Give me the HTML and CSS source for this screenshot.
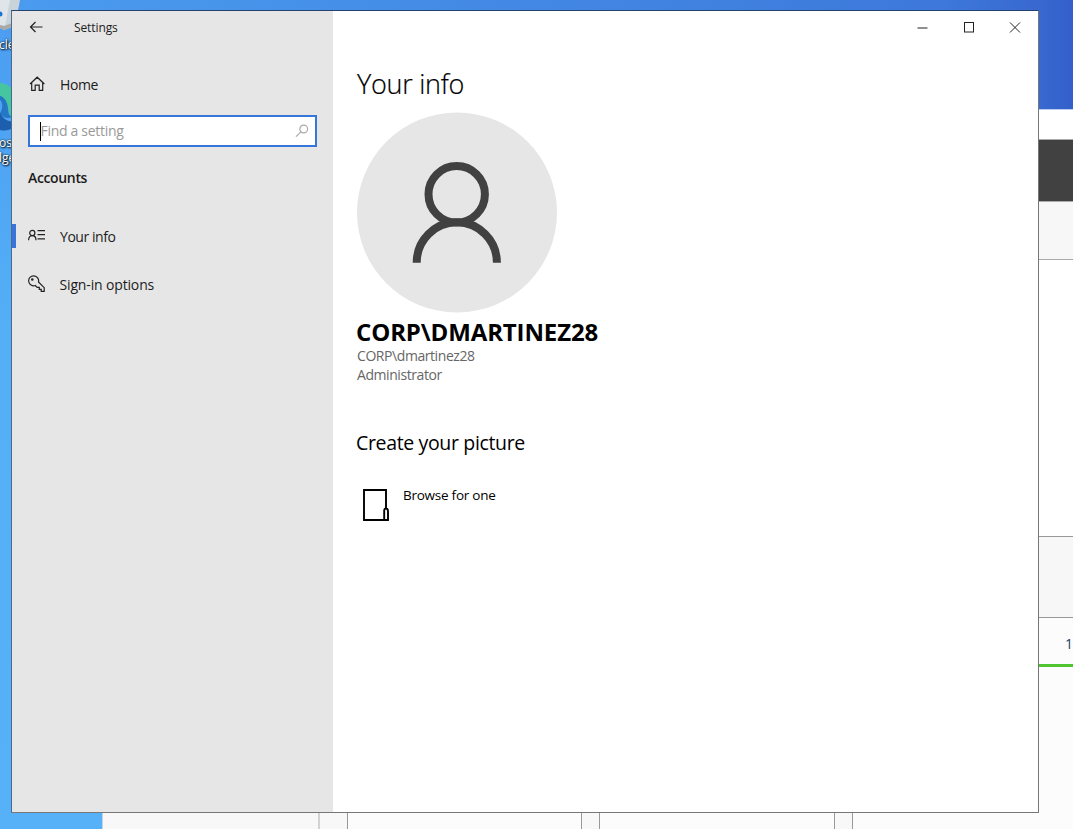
FILE: index.html
```html
<!DOCTYPE html>
<html lang="en">
<head>
<meta charset="utf-8">
<title>Settings</title>
<link rel="stylesheet" href="styles.css">
</head>
<body>
<div class="desktop">
  <div class="shortcut bin">
    <svg width="24" height="34" viewBox="0 0 24 34"><path d="M0 0H20L15 26 4 30 0 28Z" fill="#c9d3da"/><path d="M0 0H10L5 26 0 25Z" fill="#dfe5e9"/><path d="M4 26L15 22V26L4 30 0 28V25Z" fill="#aaa9a7"/><circle cx="0" cy="14" r="2.5" fill="#1876d2"/></svg>
    <span class="label">cle</span>
  </div>
  <div class="shortcut edge">
    <svg width="24" height="50" viewBox="0 0 24 50"><path d="M0 0C8 0 16 6 16 20V34H10C9 24 6 17 0 15Z" fill="#45c5a0"/><path d="M0 29C3 36 8 40 16 38V43C10 48 4 48 0 47Z" fill="#1c5fae"/><path d="M0 13C5 14 8 20 8 27 8 31 10 33 12 34 8 36 3 35 0 30 3 26 3 19 0 17Z" fill="#2477c4"/></svg>
    <span class="label">os</span><span class="label">lge</span>
  </div>

  <div class="backwin">
    <div class="b-title"></div>
    <div class="b-dark"></div>
    <div class="b-tools"></div>
    <div class="b-body"></div>
    <div class="b-panel"></div>
    <div class="b-tab">1</div>
    <div class="b-cols">
      <div class="gutter first"></div>
      <div class="gutter second"></div>
      <div class="cell c1"></div>
      <div class="gutter g2"></div>
      <div class="cell c2"></div>
      <div class="gutter g3"></div>
      <div class="cell rest"></div>
    </div>
  </div>

  <div class="window">
    <aside class="sidebar">
      <header class="titlebar">
        <svg width="14" height="12" viewBox="0 0 14 12" class="line"><path d="M13.500 6H1.500M6.500 1L1.500 6l5 5"/></svg>
        <span class="apptitle">Settings</span>
      </header>
      <div class="item home">
        <svg width="18" height="18" viewBox="0 0 18 18" class="line"><path d="M2 9L9.200 2.200 16.400 9M3.700 7.600V15.300H7.200V10.200H11.200V15.300H14.700V7.600"/></svg>
        <span class="t-home">Home</span>
      </div>
      <div class="search">
        <span class="caret"></span><span class="hint">Find a setting</span>
        <svg width="14" height="14" viewBox="0 0 14 14"><circle cx="8.7" cy="5" r="3.9"/><path d="M5.9 7.8L1 12.7"/></svg>
      </div>
      <div class="section">Accounts</div>
      <div class="item active">
        <svg width="18" height="14" viewBox="0 0 18 14" class="line"><circle cx="4.3" cy="4" r="2.6"/><path d="M.6 11.200C.6 8.500 2 6.700 4.300 6.700S8 8.500 8 11.200M9.500 1.700H17M9.500 5.700H17M9.500 9.900H17"/></svg>
        <span class="t-info">Your info</span>
      </div>
      <div class="item signin">
        <svg width="18" height="18" viewBox="0 0 18 18" class="line"><path d="M7.300 10.500A5 5 0 1 1 10.500 7L16.200 12.700V16.300H13.200V14.300H11.300V12.400H9.200Z"/><circle cx="4.300" cy="4.500" r=".7"/></svg>
        <span class="t-sign">Sign-in options</span>
      </div>
    </aside>
    <main class="content">
      <div class="controls">
        <svg width="46" height="32" viewBox="0 0 46 32"><path d="M17.500 17H27.500"/></svg>
        <svg width="46" height="32" viewBox="0 0 46 32"><rect x="18.5" y="11.5" width="9" height="9.500"/></svg>
        <svg width="46" height="32" viewBox="0 0 46 32"><path d="M18 11.500L28 21.500M28 11.500L18 21.500"/></svg>
      </div>
      <h1>Your info</h1>
      <svg class="avatar" width="200" height="201" viewBox="0 0 200 201"><circle cx="100" cy="100.500" r="100" fill="#e6e6e6"/><g fill="none" stroke="#414141" stroke-width="8"><circle cx="99.7" cy="82.300" r="28.2"/><path d="M59.700 150.700A40 40.300 0 0 1 139.900 150.700"/></g></svg>
      <div class="name">CORP\DMARTINEZ28</div>
      <div class="meta">CORP\dmartinez28</div>
      <div class="meta">Administrator</div>
      <h2>Create your picture</h2>
      <div class="browse">
        <svg width="28" height="34" viewBox="0 0 28 34"><path d="M24 20.500V2H2V32H26V23.500Q26 20.500 24 20.500T22.200 23.500V32" fill="none" stroke="#000" stroke-width="1.900"/></svg>
        <span>Browse for one</span>
      </div>
    </main>
  </div>
</div>
</body>
</html>
```
FILE: styles.css
```css
* { box-sizing: border-box; }
body { margin: 0; font-family: "Open Sans", "Noto Sans", sans-serif; font-size: 14px; color: #1c1c1c; }
svg { display: block; flex: none; }
span { white-space: nowrap; }
.desktop { position: relative; width: 1073px; height: 829px; overflow: hidden;
  background: linear-gradient(15deg, rgba(61,116,218,0) 0%, #3d78da 85%, #355fcb 100%) top / 100% 109px no-repeat, linear-gradient(#4a9cf0, #54aff7 40%, #56b1f8); }
.shortcut { position: absolute; left: 0; display: flex; flex-direction: column; }
.bin { top: 0; }
.edge { top: 83px; }
.label { color: #fff; font-size: 12px; line-height: 15px; text-shadow: 1px 1px 2px #000, 0 0 2px #000; }
.bin .label { margin-top: 3px; margin-left: -1px; }
.edge .label { margin-left: -1px; position: relative; top: 2px; }
.desktop { background: linear-gradient(to right, rgba(61,120,218,0) 0%, #3d78da 88%, #3868d0 97%, #345fcb 100%) top / 100% 109px no-repeat, linear-gradient(#4a9cf0, #54aff7 40%, #56b1f8); }

.backwin { position: absolute; left: 102px; top: 109px; width: 971px; height: 720px; display: flex; flex-direction: column; background: #fcfcfc; border-left: 1px solid #c4d4e0; }
.b-title { height: 31px; background: #fff; border-top: 1px solid #b9cdf0; border-bottom: 1px solid #aaa; }
.b-dark { height: 61px; background: #414141; }
.b-tools { height: 59px; background: #f7f7f7; border-top: 1px solid #aaa; border-bottom: 1px solid #aaa; }
.b-body { height: 276px; background: #fff; }
.b-panel { height: 82px; background: #f7f7f7; border-top: 1px solid #999; border-bottom: 1px solid #999; }
.b-tab { height: 49px; border-bottom: 3px solid #4fc332; text-align: right; line-height: 52px; color: #1d3f63; }
.b-cols { flex: 1; display: flex; }
.gutter { background: #f8f8f8; border-right: 1px solid #999; }
.first { width: 217px; border-right: 2px solid #d2d2d2; }
.second { width: 28px; }
.cell { border-right: 1px solid #999; }
.c1 { width: 234px; }
.g2 { width: 18px; }
.c2 { width: 235px; }
.g3 { width: 18px; }
.rest { flex: 1; border: 0; }

.window { position: absolute; left: 11px; top: 10px; width: 1028px; height: 803px; border: 1px solid #777; border-top-color: #23436c; border-left-color: #4b6b88; display: flex; background: #fff; }
.sidebar { width: 321px; background: #e6e6e6; display: flex; flex-direction: column; }
.line { fill: none; stroke: #222; stroke-width: 1.2; }
.titlebar { height: 32px; display: flex; align-items: center; gap: 31px; padding-left: 17px; }
.apptitle { font-size: 12px; line-height: 16px; padding-top: 2px; letter-spacing: -0.1px; }
.item { height: 48px; display: flex; align-items: center; gap: 14px; padding-left: 16px; }
.home { margin-top: 17px; }
.t-home { letter-spacing: -0.4px; }
.t-info { letter-spacing: -0.45px; }
.t-sign { letter-spacing: -0.15px; margin-left: -0.5px; }
.search { margin: 7px 16px 0; height: 32px; border: 2px solid #3577d8; background: #fff; display: flex; align-items: center; padding: 0 6px 0 10px; color: #999; letter-spacing: -0.3px; }
.hint { padding-bottom: 1px; margin-left: -0.5px; }
.caret { width: 1px; height: 19px; background: #000; }
.search svg { margin-left: auto; fill: none; stroke: #aaa; stroke-width: 1.2; }
.section { margin: 21px 0 0 16px; line-height: 20px; font-weight: 600; letter-spacing: -0.35px; }
.active { margin-top: 24px; position: relative; }
.active::before { content: ""; position: absolute; left: 0; top: 12px; width: 4px; height: 24px; background: #3a74d8; }

.content { flex: 1; padding-left: 24px; display: flex; flex-direction: column; color: #000; }
.controls { display: flex; justify-content: flex-end; height: 33px; }
.controls svg { fill: none; stroke: #222; stroke-width: 1; }
h1 { margin: 22px 0 0; font-size: 27px; font-weight: 300; line-height: 36px; letter-spacing: -0.28px; -webkit-text-stroke: 0.2px #000; }
.avatar { margin-top: 10px; }
.name { margin: 3px 0 0 -1px; font-size: 24px; line-height: 32px; font-weight: 700; letter-spacing: -0.13px; }
.meta { font-size: 14px; line-height: 19px; color: #666; letter-spacing: -0.43px; position: relative; top: -2px; }
h2 { margin: 43px 0 0 -1px; font-size: 19.5px; line-height: 28px; font-weight: 400; letter-spacing: -0.35px; }
.browse { margin-top: 31px; display: flex; gap: 13px; padding-left: 5px; }
.browse span { font-size: 13.5px; line-height: 14px; letter-spacing: -0.25px; }
```
